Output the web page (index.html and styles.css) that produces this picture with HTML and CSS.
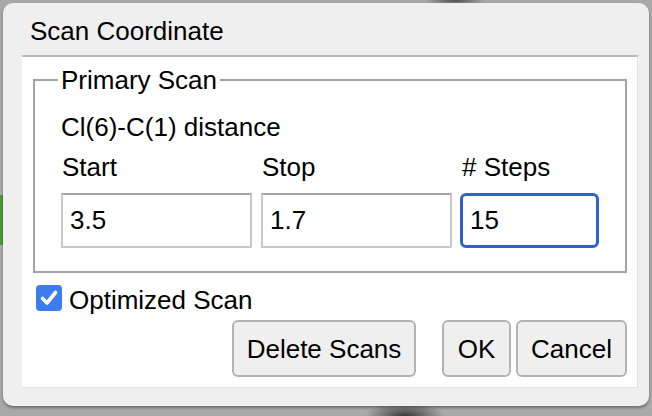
FILE: index.html
```html
<!DOCTYPE html>
<html>
<head>
<meta charset="utf-8">
<link rel="stylesheet" href="styles.css">
</head>
<body>
<div class="screen">
  <div class="dialog">
    <div class="titlebar">Scan Coordinate</div>
    <div class="panel">
      <fieldset class="group">
        <legend class="legend">Primary Scan</legend>
        <div class="desc">Cl(6)-C(1) distance</div>
        <div class="grid">
          <div class="label">Start</div>
          <div class="label">Stop</div>
          <div class="label"># Steps</div>
          <div class="field">3.5</div>
          <div class="field">1.7</div>
          <div class="field focused">15</div>
        </div>
      </fieldset>
      <div class="check-row">
        <span class="checkbox">
          <svg viewBox="0 0 26 26" width="26" height="26"><path d="M6.5 13.5 L11 18 L19.5 7.5" fill="none" stroke="#fff" stroke-width="3.6" stroke-linecap="round" stroke-linejoin="round"/></svg>
        </span>
        <span class="check-label">Optimized Scan</span>
      </div>
      <div class="buttons">
        <div class="btn btn-delete">Delete Scans</div>
        <div class="btn btn-ok">OK</div>
        <div class="btn btn-cancel">Cancel</div>
      </div>
    </div>
  </div>
</div>
</body>
</html>
```
FILE: styles.css
```css
html, body {
  margin: 0;
  padding: 0;
}
body {
  font-family: "Liberation Sans", Arial, sans-serif;
  color: #000;
}
.screen {
  width: 652px;
  height: 416px;
  overflow: hidden;
  box-sizing: border-box;
  padding-top: 3px;
  padding-left: 3px;
  background:
    radial-gradient(ellipse 30px 6px at 455px 0px, #4a4a4a 0%, rgba(74,74,74,0) 100%),
    radial-gradient(ellipse 40px 14px at 405px 416px, #3a3a3a 0%, rgba(58,58,58,0) 100%),
    linear-gradient(to bottom, transparent 195px, #4a9a3a 195px, #4a9a3a 245px, transparent 245px) 0 0 / 3px 416px no-repeat,
    #a9a9a9;
}
.dialog {
  width: 646px;
  height: 403px;
  background: #efefef;
  border-radius: 10px;
  box-shadow: 0 2px 3px rgba(0,0,0,0.35);
  font-size: 26px;
  line-height: 30px;
}
.titlebar {
  padding: 13px 0 9px 27px;
  height: 30px;
}
.panel {
  margin-left: 19px;
  width: 616px;
  height: 333px;
  box-sizing: border-box;
  background: #fff;
  border-top: 2px solid #b8b8b8;
  border-right: 1px solid #e2e2e2;
  border-bottom: 1px solid #e2e2e2;
  padding-top: 8px;
}
.group {
  margin: 0 0 0 11px;
  width: 594px;
  box-sizing: border-box;
  border: 2px solid #a4a4a4;
  padding: 17px 0 23px 26px;
  min-width: 0;
}
.legend {
  margin-left: -3px;
  padding: 0 3px;
  line-height: 30px;
}
.desc {
  height: 30px;
}
.grid {
  margin-top: 10px;
  display: grid;
  grid-template-columns: 191px 191px 138px;
  column-gap: 9px;
  row-gap: 11px;
}
.label {
  padding-left: 1px;
  height: 30px;
}
.field {
  height: 55px;
  box-sizing: border-box;
  border: 2px solid #c8c8c8;
  border-top-color: #a3a3a3;
  padding-left: 7px;
  line-height: 51px;
}
.field.focused {
  margin-left: -1px;
  border: 3px solid #3062c8;
  border-radius: 6px;
  padding-left: 7px;
  line-height: 49px;
}
.check-row {
  margin: 10px 0 0 14px;
  display: flex;
  align-items: center;
  height: 30px;
}
.checkbox {
  width: 26px;
  height: 26px;
  border-radius: 4px;
  background: #3d7cf0;
  display: flex;
}
.check-label {
  margin-left: 7px;
  padding-top: 3px;
}
.buttons {
  margin-top: 7px;
  display: flex;
  justify-content: flex-end;
  padding-right: 10px;
}
.btn {
  height: 57px;
  box-sizing: border-box;
  border: 2px solid #b2b2b2;
  border-radius: 6px;
  background: #efefef;
  display: flex;
  align-items: center;
  justify-content: center;
}
.btn-delete {
  width: 184px;
  margin-right: 26px;
}
.btn-ok {
  width: 69px;
  margin-right: 5px;
}
.btn-cancel {
  width: 111px;
}
```
